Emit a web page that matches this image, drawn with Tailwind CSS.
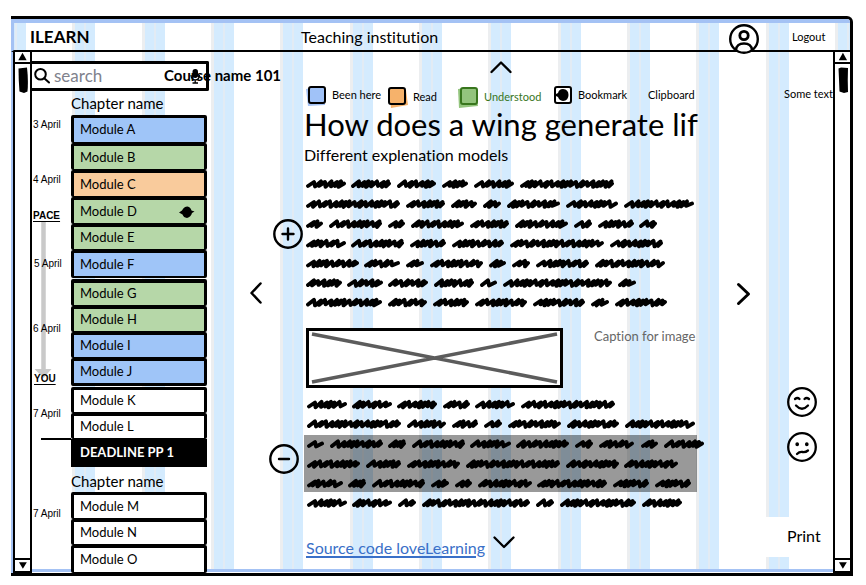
<!DOCTYPE html>
<html lang="en">
<head>
<meta charset="utf-8">
<title>ILEARN</title>
<script src="https://cdn.jsdelivr.net/npm/@tailwindcss/browser@4"></script>
</head>
<body class="bg-white text-black font-['Lato',sans-serif] [font-variant-ligatures:none]">
<div class="relative isolate mt-4 ml-[11px] mr-[13px] overflow-hidden rounded-tr-md border-t-3 border-r-3 border-b-3 border-black">

  <!-- column guides -->
  <div class="absolute inset-0 bottom-px -z-10 overflow-hidden border-t-4 border-b-3 border-[#a4c2f4]" aria-hidden="true">
    <div id="guides" class="absolute inset-y-0 -left-2 -right-2 flex justify-between"></div>
  </div>

  <header class="flex h-[33px] items-center border-b-2 border-black border-l-3 border-l-[#a4c2f4] pl-4 pt-1">
    <a href="#" class="w-[271px] text-[17px] leading-5 font-bold">ILEARN</a>
    <span class="flex-1 text-base leading-5">Teaching institution</span>
    <button class="-mb-1 size-[30px]" aria-label="Account">
      <svg viewBox="0 0 30 30" class="size-[30px]" fill="none" stroke="#000" stroke-width="2.4"><circle cx="15" cy="15" r="13.800" fill="#fff"/><circle cx="15" cy="11.500" r="4.200" stroke-width="2.800"/><path d="M7 26C7.500 20.500 11 19.500 15 19.500S22.500 20.500 23 26"/></svg>
    </button>
    <a href="#" class="ml-[33px] w-[58px] text-[11px] leading-4">Logout</a>
  </header>

  <div class="flex items-stretch border-l-2 border-[#a4c2f4]">
    <!-- left scrollbar -->
    <div class="flex w-[19px] shrink-0 flex-col items-center border-l-2 border-r-2 border-black bg-white" aria-hidden="true">
      <svg viewBox="0 0 16 12" class="h-3 w-full border-b-2 border-black"><path d="M8 1L13 10H3Z"/></svg>
      <svg viewBox="0 0 10 26" class="mt-[3px] h-[26px] w-[10px]"><path d="M.5 1.500L9 .5Q10.500 13 9.500 24.500L6 26L1.500 24.500Q.5 12 .5 1.500Z"/></svg>
      <svg viewBox="0 0 16 14" class="mt-auto h-[15px] w-full border-t-2 border-b-2 border-black"><path d="M3.500 3H13.500L8.500 11Z"/></svg>
    </div>

    <!-- sidebar -->
    <aside class="relative w-[177px] shrink-0 pt-[9px]">
      <label class="flex h-[30px] items-center rounded-r-xs border-t-3 border-r-3 border-b-3 border-black bg-white">
        <svg viewBox="0 0 16 16" class="ml-[2px] size-4" fill="none" stroke="#000" stroke-width="2" stroke-linecap="round"><circle cx="6.500" cy="6.300" r="5.300"/><path d="M10.500 10.500L15 14.500"/></svg>
        <input type="search" placeholder="search" aria-label="Search" class="ml-1 w-[136px] bg-transparent text-[17px] leading-5 outline-none placeholder:text-[#80828c]">
        <svg viewBox="0 0 10 16" class="h-4 w-[10px]"><rect x="2.500" y="1" width="5.500" height="9" rx="2.700"/><path d="M1 7Q1.200 12 5.200 12T9.400 7M5.200 12V15M2.500 15H8" fill="none" stroke="#000" stroke-width="1.300"/></svg>
      </label>
      <strong class="absolute left-[132px] top-[13px] text-[15px] leading-5 font-bold whitespace-nowrap">Course name 101</strong>

      <div class="flex">
        <div class="w-[39px] shrink-0 pl-px pt-px text-[10px] leading-3 whitespace-nowrap font-['Liberation_Sans',sans-serif]">
          <p class="mt-[27px]">3 April</p>
          <p class="mt-[43px]">4 April</p>
          <div class="relative mt-6">
            <svg viewBox="0 0 20 160" class="absolute left-0 top-2 -z-10 h-[160px] w-5" fill="none" stroke="#c9c9c9" stroke-width="4.500"><path d="M10.500 4V156"/><path d="M1.500 151H18.500L10.500 160Z" fill="#c9c9c9" stroke="none"/></svg>
            <b class="block underline underline-offset-2">PACE</b>
            <p class="mt-9 pl-px">5 April</p>
            <p class="mt-[53px]">6 April</p>
            <b class="mt-[38px] block pl-px underline underline-offset-2">YOU</b>
          </div>
          <p class="mt-[23px]">7 April</p>
          <div class="mt-[18px] ml-2 h-[2px] bg-black"></div>
          <p class="mt-[68px]">7 April</p>
        </div>
        <nav class="w-[136px] text-[13px]" id="modules" aria-label="Modules"></nav>
      </div>
    </aside>

    <!-- previous page and expand controls -->
    <div class="flex w-[95px] shrink-0 pl-[41px]">
      <button class="mt-[230px] h-[22px] w-3" aria-label="Previous"><svg viewBox="0 0 12 22" class="h-[22px] w-3" fill="none" stroke="#000" stroke-width="2.500" stroke-linecap="round" stroke-linejoin="round"><path d="M10.500 1.500L1.500 11L10.500 20.500"/></svg></button>
      <div class="ml-[7px] flex w-[34px] flex-col">
        <button class="mt-[167px] size-[30px] self-end" aria-label="Expand"><svg viewBox="0 0 30 30" class="size-[30px]" fill="none" stroke="#000" stroke-width="2.400" stroke-linecap="round"><circle cx="15" cy="15" r="13.700"/><path d="M9.500 15H20.500M15 9.500V20.500"/></svg></button>
        <button class="mt-[195px] size-[30px]" aria-label="Collapse"><svg viewBox="0 0 30 30" class="size-[30px]" fill="none" stroke="#000" stroke-width="2.400" stroke-linecap="round"><circle cx="15" cy="15" r="13.700"/><path d="M10 15H20"/></svg></button>
      </div>
    </div>

    <!-- article -->
    <main class="min-w-0 flex-1 pt-[9px]">
      <button class="mx-auto block h-[13px] w-[22px]" aria-label="Up"><svg viewBox="0 0 22 13" class="h-[13px] w-[22px]" fill="none" stroke="#000" stroke-width="2.300" stroke-linecap="round" stroke-linejoin="round"><path d="M1.500 11L11 1.500L20.500 11"/></svg></button>
      <ul class="mt-[10px] flex h-[22px] items-center pl-[3px] text-[11px] leading-4 whitespace-nowrap">
        <li class="flex w-[81px] items-center gap-[6px]"><svg viewBox="0 0 19 20" class="h-5 w-[19px] overflow-visible"><path d="M-1 4L17 1L18 20L1 21Z" fill="#a4c2f4"/><rect x="2" y="2" width="16" height="16" rx="2" fill="#a0c2f8" stroke="#000" stroke-width="2"/></svg>Been here</li>
        <li class="flex w-[71px] items-center gap-[6px] pt-[3px]"><svg viewBox="0 0 19 20" class="h-5 w-[19px] overflow-visible"><path d="M1 1L18 3L20 18L3 21Z" fill="#f6b26b"/><rect x="1" y="1" width="16" height="16" rx="2" fill="#f6b26b" stroke="#000" stroke-width="2"/></svg>Read</li>
        <li class="flex w-[95px] items-center gap-[6px] pt-[3px] text-[#38761d]"><svg viewBox="0 0 19 20" class="h-5 w-[19px] overflow-visible"><path d="M-1 2L16 0L19 19L0 21Z" fill="#93c47d"/><rect x="2" y="1" width="16" height="16" rx="2" fill="#93c47d" stroke="#38761d" stroke-width="2"/></svg>Understood</li>
        <li class="flex w-[94px] items-center gap-[6px]"><svg viewBox="0 0 18 18" class="size-[18px]"><rect x="1" y="1" width="16" height="16" rx="2" fill="#fff" stroke="#000" stroke-width="2"/><path d="M1 8.500L4 7Q5 3 9 3Q14.500 3.500 14.500 9T9 15Q5 14.500 4 11L1 9.500Z"/></svg>Bookmark</li>
        <li>Clipboard</li>
      </ul>
      <h1 class="text-[31px] leading-9 whitespace-nowrap">How does a wing generate lif</h1>
      <h2 class="mt-[3px] text-base leading-5">Different explenation models</h2>
      <svg class="scribble mt-[9px] block h-[140px] w-full overflow-visible" data-block="intro" role="img" aria-label="Paragraph"></svg>

      <figure class="mt-[14px] ml-[2px] flex h-[60px]">
        <svg viewBox="0 0 257 60" class="h-[60px] w-[257px] shrink-0"><rect x="1.500" y="1.500" width="254" height="57" fill="#fff" stroke="#000" stroke-width="3"/><path d="M6 6L251 54M6 54L251 6" stroke="#5c5c5c" stroke-width="3.500"/></svg>
        <figcaption class="ml-[31px] text-[13px] leading-4 whitespace-nowrap text-[#666]">Caption for image</figcaption>
      </figure>

      <svg class="scribble mt-[6px] block h-[41px] w-full overflow-visible" data-block="body" role="img" aria-label="Paragraph"></svg>
      <div class="h-[57px] bg-black/40"><svg class="scribble block h-[57px] w-full overflow-visible" data-block="marked" role="img" aria-label="Marked paragraph"></svg></div>
      <svg class="scribble block h-[22px] w-full overflow-visible" data-block="tail" role="img" aria-label="Paragraph"></svg>

      <div class="mt-3 flex items-center gap-2 pl-[2px]">
        <a href="#" class="mt-3 text-base leading-5 whitespace-nowrap text-[#3a70c8] underline decoration-2 underline-offset-2">Source code loveLearning</a>
        <button class="h-[13px] w-[22px]" aria-label="Down"><svg viewBox="0 0 22 13" class="h-[13px] w-[22px]" fill="none" stroke="#000" stroke-width="2.300" stroke-linecap="round" stroke-linejoin="round"><path d="M1.500 1.500L11 11L20.500 1.500"/></svg></button>
      </div>
    </main>

    <div class="w-[67px] shrink-0 pl-[39px]">
      <button class="mt-[230px] h-6 w-[15px]" aria-label="Next"><svg viewBox="0 0 15 24" class="h-6 w-[15px]" fill="none" stroke="#000" stroke-width="3" stroke-linecap="round" stroke-linejoin="round"><path d="M2.500 2.500L12.500 12L2.500 21.500"/></svg></button>
    </div>

    <!-- feedback column -->
    <div class="flex w-[69px] shrink-0 flex-col">
      <p class="mt-[34px] pl-5 text-[11px] leading-4 whitespace-nowrap">Some text</p>
      <button class="mt-[285px] ml-[23px] size-[30px]" aria-label="Happy"><svg viewBox="0 0 30 30" class="size-[30px]" fill="none" stroke="#000" stroke-width="2.300" stroke-linecap="round"><circle cx="15" cy="15" r="13.800" fill="#fff"/><path d="M8 12Q10.500 10 12.500 12M17.500 12Q19.500 10 22 12M9 18.500Q15 25 21 18.500"/></svg></button>
      <button class="mt-[15px] ml-[23px] size-[30px]" aria-label="Unhappy"><svg viewBox="0 0 30 30" class="size-[30px]" fill="none" stroke="#000" stroke-width="2.300" stroke-linecap="round"><circle cx="15" cy="15" r="13.800" fill="#fff"/><path d="M10.200 12V12.400M19.800 12V12.400" stroke-width="3.600"/><path d="M10 22Q12.500 19.500 15.500 20T21 18.500"/></svg></button>
      <div class="mt-[55px] flex h-10 items-center bg-white pl-[23px]"><button class="pb-[2px] text-base leading-5">Print</button></div>
    </div>

    <!-- right scrollbar -->
    <div class="flex w-[17px] shrink-0 flex-col items-center border-l-2 border-black bg-white" aria-hidden="true">
      <svg viewBox="0 0 16 12" class="h-3 w-full border-b-2 border-black"><path d="M8.500 1L13.500 10H3.500Z"/></svg>
      <svg viewBox="0 0 10 26" class="mt-[3px] h-[26px] w-[10px]"><path d="M.5 1.500L3 .5L10 1Q9.500 13 10 25L6 26L1.500 24.500Q1 12 .5 1.500Z"/></svg>
      <svg viewBox="0 0 16 14" class="mt-auto h-[15px] w-full border-t-2 border-b-2 border-black"><path d="M3.500 3H13.500L8.500 11Z"/></svg>
    </div>
  </div>
</div>

<script>
document.getElementById('guides').innerHTML = Array(13).fill(
  '<div class="flex w-[23px] bg-[#d4ebfe]"><div class="h-full w-[3px] bg-[#eceef0]"></div><div class="ml-[9px] h-full w-[2px] bg-[#e2ebf4]"></div></div>').join('');

const state = { b: 'bg-[#9fc5f8]', g: 'bg-[#b6d7a8]', o: 'bg-[#f9cb9c]', w: 'bg-white' };
const size = { 26: 'h-[26px]', 27: 'h-[27px]', 28: 'h-[28px]' };
const mark = '<svg viewBox="0 0 16 12" class="mr-[9px] h-3 w-4"><path d="M0 6.500L3 4.500Q5 .5 8.500 .5Q11.500 1 12.500 4.500L15.500 5.500L13 7Q12 11 8 12Q4.500 11.500 3.500 8.500Z"/></svg>';
const row = (name, s, h, extra = 'border-b-1') =>
  `<button class="flex w-full items-center justify-between rounded-xs border-3 border-black pl-[6px] text-left ${state[s]} ${size[h]} ${extra}">Module ${name}${name === 'D' ? mark : ''}</button>`;
document.getElementById('modules').innerHTML =
  '<h3 class="h-6 text-[15px] leading-6">Chapter name</h3>' +
  row('A', 'b', 28) + row('B', 'g', 27) + row('C', 'o', 27) + row('D', 'g', 27) + row('E', 'g', 26) + row('F', 'b', 28, 'border-b-2') +
  row('G', 'g', 27, 'mt-px border-t-4 border-b-1') + row('H', 'g', 26) + row('I', 'b', 26) + row('J', 'b', 28, '') +
  row('K', 'w', 26, 'mt-px border-b-1') + row('L', 'w', 26) +
  '<button class="flex h-[28px] w-full items-center bg-black pl-[9px] font-bold text-white">DEADLINE PP 1</button>' +
  '<h3 class="h-[25px] text-[15px] leading-7">Chapter name</h3>' +
  row('M', 'w', 27) + row('N', 'w', 26) + row('O', 'w', 28);

// Each line: [vertical centre, word start, word end, ...] in px from the column's left edge.
const blocks = {
  intro: [
    [10, 2,42, 47,87, 93,132, 138,164, 170,210, 216,310],
    [30, 2,96, 102,141, 147,173, 179,197, 203,256, 262,314, 320,390],
    [50, 2,19, 25,78, 84,101, 107,160, 166,205, 211,264, 270,288, 294,330, 335,353],
    [69.5, 2,42, 47,100, 106,142, 148,200, 206,300, 306,359],
    [89.5, 2,55, 60,96, 102,120, 126,179, 185,202, 208,226, 232,285, 291,361],
    [109, 2,38, 43,79, 84,124, 130,170, 176,193, 199,308, 314,332],
    [128.5, 2,78, 84,123, 129,165, 171,223, 229,281, 287,305, 311,363]],
  body: [
    [10.5, 3,43, 48,88, 93,133, 139,166, 171,211, 217,311],
    [30, 3,97, 103,142, 148,174, 180,198, 204,257, 263,315, 321,391]],
  marked: [
    [9, 3,20, 26,79, 84,102, 108,161, 166,207, 212,265, 271,289, 295,330, 337,354, 360,400],
    [29, 3,56, 62,97, 103,156, 162,256, 262,315, 320,374],
    [48.5, 3,39, 44,62, 68,121, 127,145, 151,168, 174,228, 233,303, 309,345, 351,387]],
  tail: [[11, 3,43, 48,88, 94,112, 118,226, 232,250, 256,332, 338,378]]
};
// Strokes alternate between loose and tight spacing, as in quick handwriting.
const gaps = [6.5, 5.5, 4, 3.5, 5, 7, 4];
const scrawl = (a, b, y) => {
  let x = a + 2, i = Math.round(a + y), d = `M${x} ${y + 2}`;
  while (x < b - 8) {
    const g = gaps[i++ % gaps.length], top = Math.min(x + 6, b - 2);
    x = Math.min(x + g, b - 5);
    d += `L${top} ${y - 2.6 + i % 2 * 0.6}L${x} ${y + 2.9 - i % 3 * 0.5}`;
  }
  return d + `L${b - 2} ${y - 0.5}`;
};
document.querySelectorAll('.scribble').forEach(svg => {
  let d = '';
  for (const [y, ...w] of blocks[svg.dataset.block])
    for (let i = 0; i < w.length; i += 2) d += scrawl(w[i], w[i + 1], y);
  svg.innerHTML = `<path d="${d}" fill="none" stroke="#000" stroke-width="3.9" stroke-linecap="round" stroke-linejoin="round"/>`;
});
</script>
</body>
</html>
